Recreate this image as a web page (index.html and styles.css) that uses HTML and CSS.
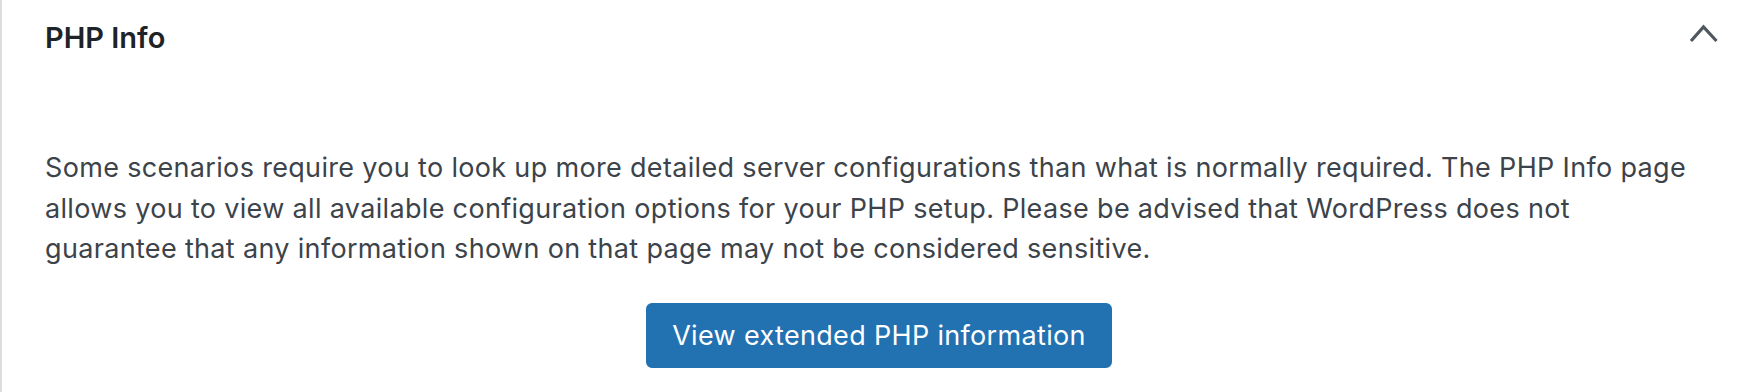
FILE: index.html
```html
<!DOCTYPE html>
<html lang="en">
<head>
<meta charset="utf-8">
<title>PHP Info</title>
<link rel="stylesheet" href="styles.css">
</head>
<body>
<div class="panel">
	<div class="panel-head">
		<h3 class="panel-title">PHP Info</h3>
		<svg class="chevron" width="32" height="20" viewBox="0 0 32 20" aria-hidden="true">
			<polyline points="3,17 15.5,3 28.5,17" fill="none" stroke="#50575e" stroke-width="3.2"></polyline>
		</svg>
	</div>
	<div class="panel-body">
		<p>Some scenarios require you to look up more detailed server configurations than what is normally required. The PHP Info page allows you to view all available configuration options for your PHP setup. Please be advised that WordPress does not guarantee that any information shown on that page may not be considered sensitive.</p>
		<div class="actions">
			<a class="button" href="#">View extended PHP information</a>
		</div>
	</div>
</div>
</body>
</html>
```

FILE: styles.css
```css
*{ margin:0; padding:0; box-sizing:border-box;}
body{ background:#fff; font-family:Inter,"Liberation Sans",Arial,sans-serif; color:#3c434a;}
.panel{ height:392px; border-left:2px solid #dcdcde; background:#fff;}
.panel-head{ display:flex; justify-content:space-between; align-items:flex-start; padding:18px 30px 0 43px;}
.panel-title{ font-size:29px; line-height:40px; font-weight:600; color:#1d2327;}
.chevron{ display:block; margin-top:6px;}
.panel-body{ padding:90px 43px 0 43px;}
.panel-body p{ font-size:27px; line-height:40.5px; letter-spacing:0.33px;}
.actions{ display:flex; justify-content:center; padding:33px 0 0 6px;}
.button{ display:inline-block; height:65px; padding:0 24px; border:2px solid #2271b1; border-radius:6px; background:#2271b1; color:#fff; font-size:27px; line-height:61px; letter-spacing:0.33px; text-decoration:none; white-space:nowrap;}
```
